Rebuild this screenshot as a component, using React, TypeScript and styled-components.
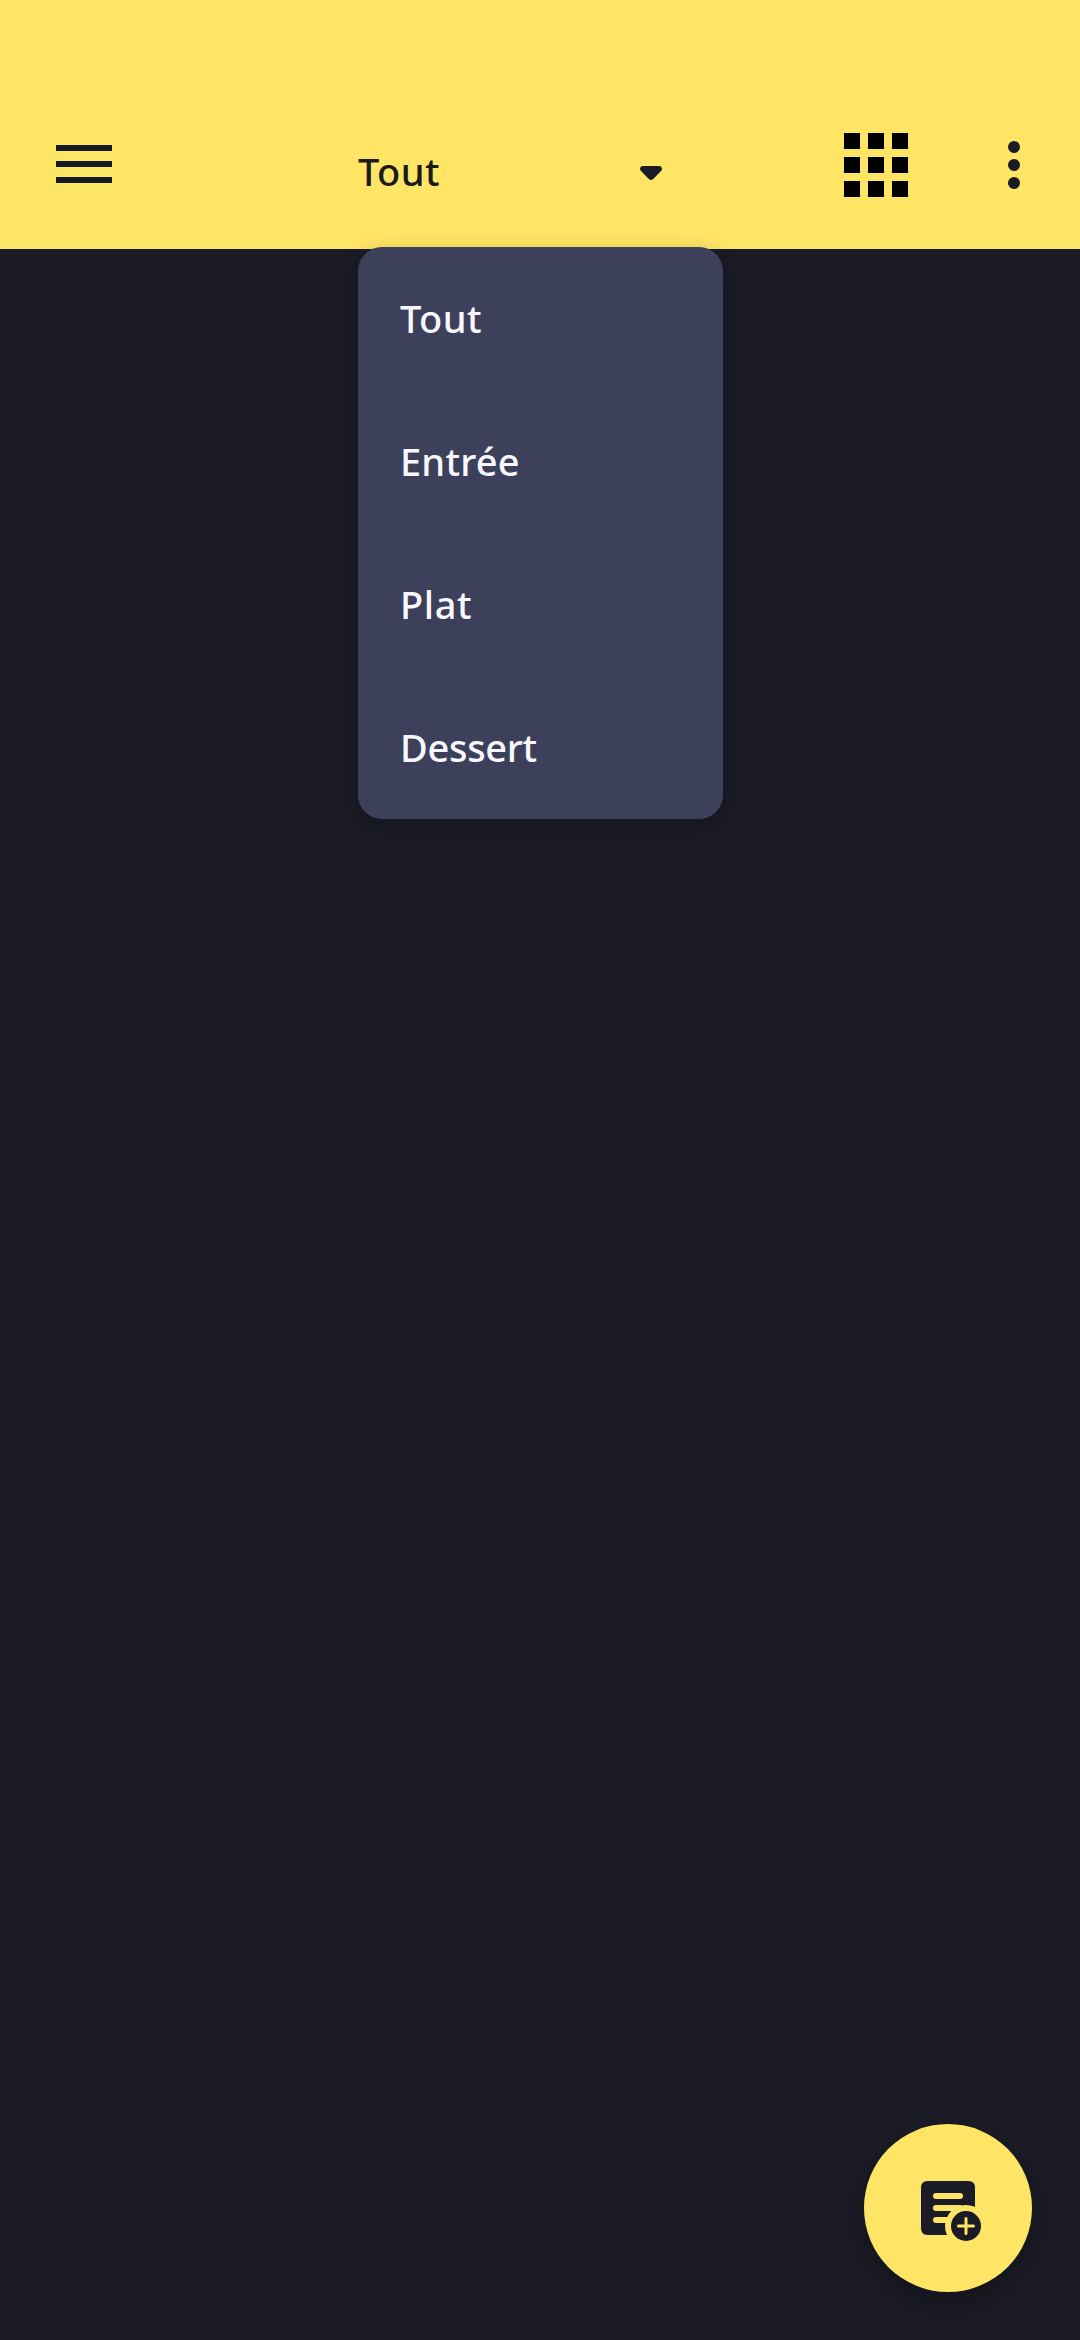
import React from "react";
import styled, { createGlobalStyle } from "styled-components";

const GlobalStyle = createGlobalStyle`
  * { box-sizing: border-box; }
  body { margin: 0; background: #1b1b26; }
`;

const Screen = styled.div`
  display: flex;
  flex-direction: column;
  width: 1080px;
  height: 2340px;
  background: #1b1b26;
  font-family: "Noto Sans", "Open Sans", sans-serif;
  overflow: hidden;
`;

const AppBar = styled.header`
  display: flex;
  align-items: center;
  height: 249px;
  padding: 81px 36px 0 36px;
  background: #ffe566;
`;

const IconButton = styled.button<{ $size: number; $lift?: number }>`
  display: flex;
  align-items: center;
  justify-content: center;
  width: ${(p) => p.$size}px;
  height: ${(p) => p.$size}px;
  padding: 0 0 ${(p) => p.$lift ?? 0}px;
  border: 0;
  background: none;

  svg { display: block; }
`;

const Picker = styled.div`
  position: relative;
  width: 365px;
  height: 168px;
  margin-left: 226px;
`;

const PickerField = styled.div`
  display: flex;
  align-items: center;
  justify-content: space-between;
  height: 100%;
  padding: 12px 61px 0 0;

  svg { margin-top: 4px; }
`;

const Label = styled.span<{ $color: string; $spacing: number }>`
  color: ${(p) => p.$color};
  font-size: 38px;
  font-weight: 500;
  line-height: 52px;
  letter-spacing: ${(p) => p.$spacing}px;
  white-space: nowrap;
`;

const Menu = styled.ul`
  position: absolute;
  top: 166px;
  left: 0;
  z-index: 1;
  width: 365px;
  margin: 0;
  padding: 0;
  list-style: none;
  border-radius: 24px;
  background: #3d405b;
  box-shadow: 0 6px 22px rgba(0, 0, 0, 0.22);
`;

const MenuItem = styled.li`
  display: flex;
  align-items: center;
  height: 143px;
  padding: 0 0 1px 42px;
`;

const Actions = styled.div`
  display: flex;
  align-items: center;
  gap: 60px;
  margin-left: auto;
`;

const Content = styled.main`
  display: flex;
  flex: 1;
  align-items: flex-end;
  justify-content: flex-end;
  padding: 48px;
`;

const Fab = styled.button`
  display: flex;
  align-items: center;
  justify-content: center;
  width: 168px;
  height: 168px;
  padding: 0;
  border: 0;
  border-radius: 50%;
  background: #ffe566;
  box-shadow: 0 10px 26px rgba(0, 0, 0, 0.3);
`;

const categories = [
  { name: "Tout", spacing: 0.4 },
  { name: "Entrée", spacing: 0.2 },
  { name: "Plat", spacing: 0.6 },
  { name: "Dessert", spacing: -0.3 },
];

const MenuIcon = () => (
  <svg width="56" height="38" viewBox="0 0 56 38" fill="#1b1b1b">
    <path d="M0 0h56v6H0zM0 16h56v6H0zM0 32h56v6H0z" />
  </svg>
);

const CaretIcon = () => (
  <svg width="22" height="14" viewBox="0 0 22 14" fill="#1b1b26">
    <path d="M3 0H19C21.7 0 23 3 21 5L13.2 12.9Q11 15 8.8 12.9L1 5C-1 3 .3 0 3 0Z" />
  </svg>
);

const GridIcon = () => (
  <svg width="64" height="64" viewBox="0 0 64 64" fill="#000">
    {[0, 24, 48].map((y) =>
      [0, 24, 48].map((x) => <rect key={`${x}-${y}`} x={x} y={y} width="16" height="16" />)
    )}
  </svg>
);

const MoreIcon = () => (
  <svg width="12" height="48" viewBox="0 0 12 48" fill="#1b1b26">
    <circle cx="6" cy="6" r="6" />
    <circle cx="6" cy="24" r="6" />
    <circle cx="6" cy="42" r="6" />
  </svg>
);

const PostAddIcon = () => (
  <svg width="72" height="72" viewBox="0 0 24 24">
    <rect x="3" y="3" width="18" height="18" rx="2" fill="#1b1b26" />
    <path d="M8 8h8M8 12h8M8 16h8" stroke="#ffe566" strokeWidth="2" strokeLinecap="round" />
    <circle cx="18" cy="18" r="7" fill="#ffe566" />
    <circle cx="18" cy="18" r="5" fill="#1b1b26" />
    <path d="M18 15.5v5M15.5 18h5" stroke="#ffe566" strokeWidth="1" strokeLinecap="round" />
  </svg>
);

export default function App() {
  return (
    <>
      <GlobalStyle />
      <Screen>
        <AppBar>
          <IconButton $size={96} $lift={2} aria-label="Menu">
            <MenuIcon />
          </IconButton>
          <Picker>
            <PickerField>
              <Label $color="#1b1b1b" $spacing={0.4}>Tout</Label>
              <CaretIcon />
            </PickerField>
            <Menu>
              {categories.map((c) => (
                <MenuItem key={c.name}>
                  <Label $color="#f8f7ff" $spacing={c.spacing}>{c.name}</Label>
                </MenuItem>
              ))}
            </Menu>
          </Picker>
          <Actions>
            <IconButton $size={96} aria-label="Grille">
              <GridIcon />
            </IconButton>
            <IconButton $size={60} aria-label="Plus">
              <MoreIcon />
            </IconButton>
          </Actions>
        </AppBar>
        <Content>
          <Fab aria-label="Ajouter">
            <PostAddIcon />
          </Fab>
        </Content>
      </Screen>
    </>
  );
}
